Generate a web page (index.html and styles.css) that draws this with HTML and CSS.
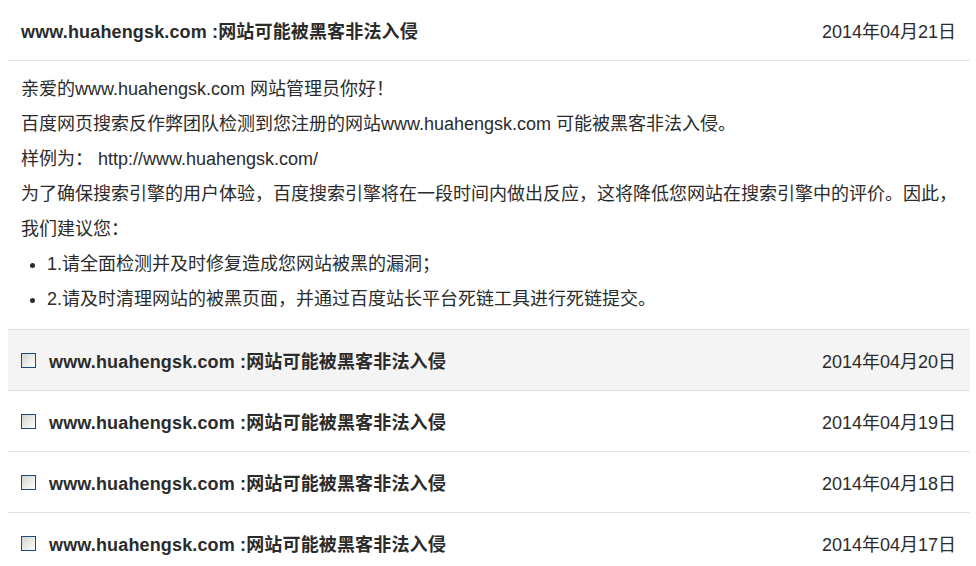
FILE: index.html
```html
<!DOCTYPE html>
<html lang="zh-CN">
<head>
    <meta charset="UTF-8">
    <link rel="stylesheet" href="styles.css">
    <title>站内信</title>
</head>
<body>
    <div class="mail-list">
        <div class="mail-row open">
            <span class="mail-title">www.huahengsk.com :网站可能被黑客非法入侵</span>
            <span class="mail-date">2014年04月21日</span>
        </div>
        <div class="mail-body">
            <p>亲爱的www.huahengsk.com 网站管理员你好！</p>
            <p>百度网页搜索反作弊团队检测到您注册的网站www.huahengsk.com 可能被黑客非法入侵。</p>
            <p>样例为： http://www.huahengsk.com/</p>
            <p>为了确保搜索引擎的用户体验，百度搜索引擎将在一段时间内做出反应，这将降低您网站在搜索引擎中的评价。因此，我们建议您：</p>
            <ul>
                <li>1.请全面检测并及时修复造成您网站被黑的漏洞；</li>
                <li>2.请及时清理网站的被黑页面，并通过百度站长平台死链工具进行死链提交。</li>
            </ul>
        </div>
        <div class="mail-row hover">
            <span class="check"></span>
            <span class="mail-title">www.huahengsk.com :网站可能被黑客非法入侵</span>
            <span class="mail-date">2014年04月20日</span>
        </div>
        <div class="mail-row">
            <span class="check"></span>
            <span class="mail-title">www.huahengsk.com :网站可能被黑客非法入侵</span>
            <span class="mail-date">2014年04月19日</span>
        </div>
        <div class="mail-row">
            <span class="check"></span>
            <span class="mail-title">www.huahengsk.com :网站可能被黑客非法入侵</span>
            <span class="mail-date">2014年04月18日</span>
        </div>
        <div class="mail-row">
            <span class="check"></span>
            <span class="mail-title">www.huahengsk.com :网站可能被黑客非法入侵</span>
            <span class="mail-date">2014年04月17日</span>
        </div>
    </div>
</body>
</html>
```

FILE: styles.css
```css
body {
    margin: 0;
    background-color: #fff;
    color: #2b2b2b;
    font-family: 'Liberation Sans', 'Noto Sans CJK SC', sans-serif;
}

.mail-list {
    margin: 0 6px 0 8px;
}

.mail-row {
    display: flex;
    align-items: center;
    height: 60px;
    padding: 0 14px 0 13px;
    border-bottom: 1px solid #e2e2e2;
}

.mail-row.hover {
    background-color: #f4f4f4;
}

.mail-title {
    flex: 1;
    font-size: 18px;
    font-weight: bold;
    letter-spacing: 0.15px;
}

.mail-date {
    font-size: 18px;
}

.check {
    width: 13px;
    height: 13px;
    margin-right: 13px;
    border: 1px solid #1c4a7c;
    background: linear-gradient(135deg, #d2d2cc, #ffffff);
}

.mail-body {
    padding: 11px 13px 12px;
    border-bottom: 1px solid #e2e2e2;
    font-size: 18px;
    line-height: 35px;
}

.mail-body p {
    margin: 0;
}

.mail-body ul {
    margin: 0;
    padding-left: 26px;
}
```
